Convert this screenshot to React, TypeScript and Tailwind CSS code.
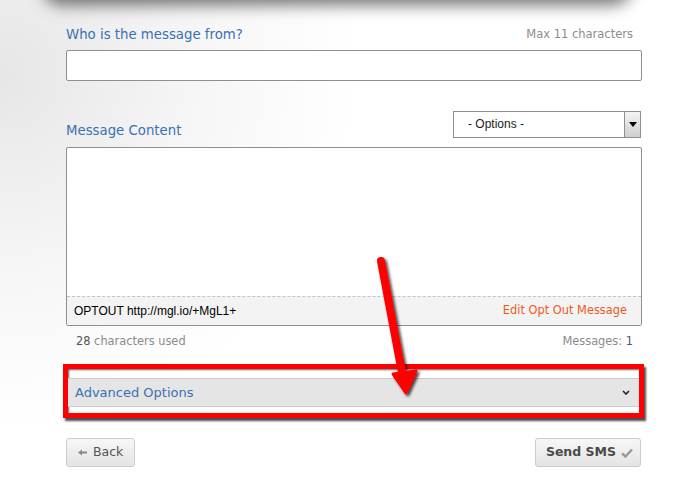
import React from "react";

const sans = "font-['DejaVu_Sans',Verdana,sans-serif]";
const arial = "font-['Liberation_Sans',Arial,sans-serif]";

function Arrow() {
  return (
    <svg
      className="pointer-events-none absolute left-0 top-0"
      width="674"
      height="489"
      viewBox="0 0 674 489"
    >
      <defs>
        <filter id="sh" x="-50%" y="-50%" width="200%" height="200%">
          <feDropShadow dx="2" dy="2" stdDeviation="1.5" floodColor="#000" floodOpacity="0.75" />
        </filter>
      </defs>
      <g filter="url(#sh)">
        <line x1="381" y1="261" x2="403" y2="378" stroke="#ff0000" strokeWidth="8" strokeLinecap="round" />
        <polygon points="393,374 416,371 406,393" fill="#ff0000" stroke="#ff0000" strokeWidth="3" strokeLinejoin="round" />
      </g>
    </svg>
  );
}

export default function App() {
  return (
    <div className="relative h-[489px] w-[674px] overflow-hidden bg-[radial-gradient(circle_at_0%_15%,#e6e6e6_0%,#f6f6f6_25%,#ffffff_45%)]">
      {/* top card, only its shadow is visible */}
      <div className="mx-auto -mt-[40px] h-[38px] w-[590px] rounded-b-[20px] bg-white shadow-[0_7px_16px_rgba(0,0,0,0.55)]" />

      <div className="ml-[66px] w-[576px] pt-[27px]">
        {/* sender */}
        <div className="flex items-center justify-between pr-[9px]">
          <span className={`${sans} text-[13.3px] text-[#3b70b4]`}>Who is the message from?</span>
          <span className={`${sans} text-[11.5px] text-[#8c8c8c]`}>Max 11 characters</span>
        </div>
        <div className="mt-[5px] h-[31px] rounded-[2px] border border-[#8f8f8f] bg-white" />

        {/* message content */}
        <div className="mt-[30px] flex items-end justify-between">
          <span className={`${sans} mb-[-3px] text-[13.3px] text-[#3b70b4]`}>Message Content</span>
          <div className="mr-[1px] flex h-[27px] w-[188px] items-center border border-[#8f8f8f] bg-white">
            <span className={`${arial} flex-1 pl-[14px] text-[12px] text-[#222]`}>- Options -</span>
            <div className="flex h-full w-[16px] items-center justify-center border-l border-[#8f8f8f] bg-[linear-gradient(#f4f4f4,#cfcfcf)]">
              <svg width="8" height="5" viewBox="0 0 8 5">
                <polygon points="0,0 8,0 4,5" fill="#000" />
              </svg>
            </div>
          </div>
        </div>
        <div className="mt-[9px] flex h-[179px] flex-col rounded-[2px] border border-[#8f8f8f] bg-white">
          <div className="flex-1" />
          <div className="flex h-[29px] items-center justify-between border-t border-dashed border-[#c4c4c4] bg-[#f3f3f3] pl-[7px] pr-[14px]">
            <span className={`${arial} text-[12px] text-black`}>OPTOUT http://mgl.io/+MgL1+</span>
            <span className={`${sans} text-[11.4px] text-[#ee5a1e]`}>Edit Opt Out Message</span>
          </div>
        </div>
        <div className={`${sans} mt-[7px] flex items-center justify-between pl-[10px] pr-[9px] text-[11.4px] text-[#8c8c8c]`}>
          <span>
            <span className="text-[#555]">28</span> characters used
          </span>
          <span>
            Messages: <span className="text-[#4a5a78]">1</span>
          </span>
        </div>

        {/* advanced options highlighted */}
        <div className="-ml-[3px] mt-[14px] w-[581px] border-[5px] border-[#ff0000] shadow-[2px_3px_2px_rgba(0,0,0,0.7),inset_1px_1px_2px_rgba(0,0,0,0.6)]">
          <div className="mt-[9px] flex h-[29px] items-center justify-between border-y border-[#cccccc] bg-[#e5e5e5] pl-[7px] pr-[9px]">
            <span className={`${sans} text-[13px] text-[#3b70b4]`}>Advanced Options</span>
            <svg width="8" height="5" viewBox="0 0 8 5">
              <polyline points="1,1 4,4 7,1" fill="none" stroke="#222" strokeWidth="1.6" />
            </svg>
          </div>
          <div className="h-[6px]" />
        </div>

        {/* buttons */}
        <div className="mt-[20px] flex items-center justify-between">
          <button className={`${sans} flex h-[29px] items-center gap-[6px] rounded-[3px] border border-[#cccccc] bg-[linear-gradient(#f7f7f7,#e4e4e4)] px-[11px] text-[12.5px] text-[#555]`}>
            <svg width="9" height="7" viewBox="0 0 9 7">
              <polygon points="0,3.5 4,0.5 4,2.5 9,2.5 9,4.5 4,4.5 4,6.5" fill="#888" />
            </svg>
            Back
          </button>
          <button className={`${sans} mr-[1px] flex h-[29px] items-center gap-[5px] rounded-[3px] border border-[#cccccc] bg-[linear-gradient(#f7f7f7,#e4e4e4)] pl-[10px] pr-[7px] text-[12.5px] font-bold text-[#4a4a4a]`}>
            Send SMS
            <svg width="12" height="10" viewBox="0 0 12 10">
              <polyline points="1,5.5 4.5,8.5 11,1.5" fill="none" stroke="#999" strokeWidth="2.4" />
            </svg>
          </button>
        </div>
      </div>

      <Arrow />
    </div>
  );
}
